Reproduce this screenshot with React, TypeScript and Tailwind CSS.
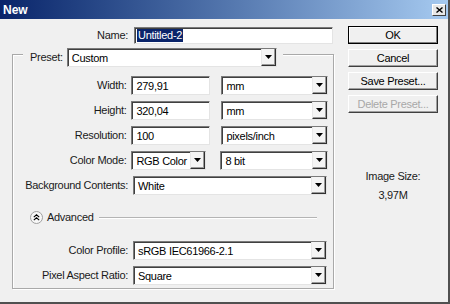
import React from "react";

const font = { fontFamily: '"Liberation Sans", Arial, sans-serif' };

function Arrow() {
  return (
    <div className="w-[15px] h-full flex items-center justify-center bg-[#f4f4f4] border-l border-l-[#e8e8e8] border-r border-b border-r-[#303030] border-b-[#303030] shadow-[inset_-1px_-1px_0_#9a9a9a]">
      <svg width="7" height="4" viewBox="0 0 7 4">
        <path d="M0 0H7L3.5 4Z" fill="#000" />
      </svg>
    </div>
  );
}

function Field({ value, w, dropdown }: { value: string; w: string; dropdown?: boolean }) {
  return (
    <div
      className={`${w} h-[19px] flex bg-white border border-t-[#7a7a7a] border-l-[#7a7a7a] border-b-[#e4e4e4] border-r-[#e4e4e4] shadow-[inset_1px_1px_0_#404040]`}
    >
      <span className="flex-1 pl-[4px] pt-[1px] leading-[16px] text-black truncate">{value}</span>
      {dropdown && <Arrow />}
    </div>
  );
}

function Row({ label, children, mt }: { label: string; children: React.ReactNode; mt: string }) {
  return (
    <div className={`flex items-center gap-[5px] ${mt}`}>
      <span className="w-[115px] text-right">{label}</span>
      {children}
    </div>
  );
}

function Button({ label, primary, disabled }: { label: string; primary?: boolean; disabled?: boolean }) {
  return (
    <div
      className={`w-[90px] h-[18px] flex items-center justify-center ${
        primary
          ? "border border-black shadow-[inset_-1px_-1px_0_#808080,inset_1px_1px_0_#ffffff]"
          : "border border-t-white border-l-white border-r-[#404040] border-b-[#404040] shadow-[inset_-1px_-1px_0_#a0a0a0]"
      } ${disabled ? "text-[#a8a8a8]" : "text-black"}`}
    >
      {label}
    </div>
  );
}

export default function App() {
  return (
    <div
      className="w-[450px] h-[304px] bg-[#f0f0f0] flex flex-col border-r-2 border-b-2 border-[#505050] overflow-hidden text-[11px] tracking-[-0.3px] text-[#1a1a1a]"
      style={font}
    >
      <div className="h-[19px] shrink-0 bg-gradient-to-r from-[#0a246a] to-[#a6caf0] flex items-center justify-between pl-[3px] pr-[2px]">
        <span className="text-white font-bold text-[12px] tracking-normal">New</span>
        <div className="w-[14px] h-[12px] bg-[#e8e8e8] border border-t-white border-l-white border-r-[#404040] border-b-[#404040] flex items-center justify-center">
          <svg width="7" height="6" viewBox="0 0 7 6">
            <path d="M0.5 0.5L6.5 5.5M6.5 0.5L0.5 5.5" stroke="#000" strokeWidth="1.4" />
          </svg>
        </div>
      </div>
      <div className="flex flex-1">
        <div className="w-[340px] shrink-0">
          <div className="flex items-center gap-[6px] mt-[8px]">
            <span className="w-[128px] text-right">Name:</span>
            <div className="w-[199px] h-[17px] flex items-center bg-white border border-t-[#7a7a7a] border-l-[#7a7a7a] border-b-[#e4e4e4] border-r-[#e4e4e4] shadow-[inset_1px_1px_0_#404040] pl-[2px]">
              <span className="bg-[#0a246a] text-white leading-[13px] px-[1px]">Untitled-2</span>
            </div>
          </div>
          <div className="ml-[12px] mt-[10px] w-[322px] h-[235px] border border-[#a9a9a9] shadow-[1px_1px_0_#ffffff,inset_1px_1px_0_#ffffff] pr-[5px]">
            <div className="flex -mt-[7px] ml-[10px]">
              <div className="flex items-center gap-[4px] bg-[#f0f0f0] pl-[7px] pr-[6px]">
                <span>Preset:</span>
                <Field value="Custom" w="w-[210px]" dropdown />
              </div>
            </div>
            <Row label="Width:" mt="mt-[9px]">
              <Field value="279,91" w="w-[80px]" />
              <div className="w-[1px]" />
              <Field value="mm" w="w-[108px]" dropdown />
            </Row>
            <Row label="Height:" mt="mt-[6px]">
              <Field value="320,04" w="w-[80px]" />
              <div className="w-[1px]" />
              <Field value="mm" w="w-[108px]" dropdown />
            </Row>
            <Row label="Resolution:" mt="mt-[6px]">
              <Field value="100" w="w-[80px]" />
              <div className="w-[1px]" />
              <Field value="pixels/inch" w="w-[108px]" dropdown />
            </Row>
            <Row label="Color Mode:" mt="mt-[6px]">
              <Field value="RGB Color" w="w-[75px]" dropdown />
              <div className="w-[5px]" />
              <Field value="8 bit" w="w-[109px]" dropdown />
            </Row>
            <Row label="Background Contents:" mt="mt-[6px]">
              <Field value="White" w="w-[194px]" dropdown />
            </Row>
            <div className="flex items-center mt-[15px] h-[14px] pl-[17px]">
              <div className="w-[13px] h-[13px] rounded-full border border-[#a0a0a0] bg-[#f8f8f8] flex items-center justify-center">
                <svg width="7" height="7" viewBox="0 0 7 7">
                  <path d="M0.8 3.2L3.5 0.8L6.2 3.2M0.8 6.2L3.5 3.8L6.2 6.2" stroke="#000" strokeWidth="1.1" fill="none" />
                </svg>
              </div>
              <span className="ml-[4px]">Advanced</span>
              <div className="ml-[5px] w-[218px] h-[1px] bg-[#b4b4b4] shadow-[0_1px_0_#ffffff]" />
            </div>
            <Row label="Color Profile:" mt="mt-[17px]">
              <Field value="sRGB IEC61966-2.1" w="w-[194px]" dropdown />
            </Row>
            <Row label="Pixel Aspect Ratio:" mt="mt-[6px]">
              <Field value="Square" w="w-[194px]" dropdown />
            </Row>
          </div>
        </div>
        <div className="flex flex-col pl-[8px] pt-[7px] gap-[5px]">
          <Button label="OK" primary />
          <Button label="Cancel" />
          <Button label="Save Preset..." />
          <Button label="Delete Preset..." disabled />
          <div className="w-[90px] flex flex-col items-center mt-[52px]">
            <span className="leading-[13px]">Image Size:</span>
            <span className="leading-[13px] mt-[6px]">3,97M</span>
          </div>
        </div>
      </div>
    </div>
  );
}
